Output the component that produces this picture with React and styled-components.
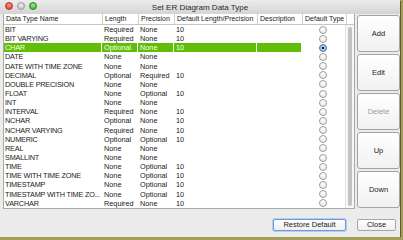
import styled, { createGlobalStyle } from 'styled-components';

const GlobalStyle = createGlobalStyle`
  html, body {
    margin: 0;
    padding: 0;
    background: #a39d55;
  }
  body {
    font-family: "Liberation Sans", Arial, sans-serif;
    -webkit-font-smoothing: antialiased;
  }
`;

const rows = [
  ['BIT', 'Required', 'None', '10'],
  ['BIT VARYING', 'Required', 'None', '10'],
  ['CHAR', 'Optional', 'None', '10'],
  ['DATE', 'None', 'None', ''],
  ['DATE WITH TIME ZONE', 'None', 'None', ''],
  ['DECIMAL', 'Optional', 'Required', '10'],
  ['DOUBLE PRECISION', 'None', 'None', ''],
  ['FLOAT', 'None', 'Optional', '10'],
  ['INT', 'None', 'None', ''],
  ['INTERVAL', 'Required', 'None', '10'],
  ['NCHAR', 'Optional', 'None', '10'],
  ['NCHAR VARYING', 'Required', 'None', '10'],
  ['NUMERIC', 'Optional', 'Optional', '10'],
  ['REAL', 'None', 'None', ''],
  ['SMALLINT', 'None', 'None', ''],
  ['TIME', 'None', 'Optional', '10'],
  ['TIME WITH TIME ZONE', 'None', 'Optional', '10'],
  ['TIMESTAMP', 'None', 'Optional', '10'],
  ['TIMESTAMP WITH TIME ZO...', 'None', 'Optional', '10'],
  ['VARCHAR', 'Required', 'None', '10']
];

const COLS = '98px 36px 36px 83px 45px 44px';

const Window = styled.div`
  width: 400px;
  height: 237px;
  background: #ececec;
  display: flex;
  flex-direction: column;
  box-shadow: 1px 1px 0 #5c5a38;
`;

const TitleBar = styled.div`
  height: 14px;
  flex: none;
  position: relative;
  display: flex;
  align-items: center;
  justify-content: center;
  background: linear-gradient(#ececec, #d4d4d4);
  font-size: 8px;
  color: #2a2a2a;
`;

const Lights = styled.div`
  position: absolute;
  left: 5px;
  top: 2px;
  display: flex;
  gap: 4px;
`;

const Light = styled.span`
  width: 8px;
  height: 8px;
  border-radius: 50%;
  box-sizing: border-box;
  border: 1px solid ${p => p.$edge};
  background: radial-gradient(circle at 50% 35%, ${p => p.$hi}, ${p => p.$color} 70%);
`;

const Body = styled.div`
  flex: 1;
  display: flex;
  gap: 2px;
  padding: 0 0 0 3px;
`;

const Table = styled.div`
  width: 352px;
  height: 195px;
  box-sizing: border-box;
  border: 1px solid #a9a9a9;
  border-top: none;
  background: #fff;
  display: flex;
  flex-direction: column;
  position: relative;
`;

const Header = styled.div`
  display: grid;
  grid-template-columns: ${COLS} 1fr;
  height: 10px;
  flex: none;
  border-bottom: 1px solid #c4c4c4;
  background: #fff;
  font-size: 7px;
  color: #222;
`;

const HeadCell = styled.div`
  line-height: 10px;
  padding-left: 2px;
  white-space: nowrap;
  overflow: hidden;
  border-left: ${p => (p.$first ? 'none' : '1px solid #cfcfcf')};
`;

const Rows = styled.div`
  flex: 1;
  display: flex;
  flex-direction: column;
  padding-right: 9px;
`;

const Row = styled.div`
  display: grid;
  grid-template-columns: ${COLS};
  height: 9.15px;
  font-size: 7.3px;
  line-height: 9.15px;
  color: ${p => (p.$selected ? '#f4ffe8' : '#222')};
`;

const Cell = styled.div`
  padding-left: ${p => (p.$first ? 1 : 2)}px;
  letter-spacing: ${p => (p.$first ? '-0.2px' : '0')};
  white-space: nowrap;
  overflow: hidden;
  background: ${p => (p.$selected ? '#62bd08' : 'transparent')};
  border-right: ${p => (p.$selected ? '1px solid #fff' : 'none')};
`;

const RadioCell = styled.div`
  display: flex;
  align-items: center;
  justify-content: center;
  padding-right: 2px;
`;

const Radio = styled.span`
  width: 8px;
  height: 8px;
  box-sizing: border-box;
  border-radius: 50%;
  border: 1px solid ${p => (p.$on ? '#4a6fa8' : '#9a9a9a')};
  background: ${p =>
    p.$on
      ? 'radial-gradient(circle, #111 0 1.3px, #bcd4f4 1.6px, #7fa8e0 100%)'
      : 'linear-gradient(#ffffff, #ececec)'};
`;

const Scroll = styled.div`
  position: absolute;
  right: 0;
  top: 11px;
  bottom: 0;
  width: 9px;
  box-sizing: border-box;
  border-left: 1px solid #e2e2e2;
  background: #f6f6f6;
  display: flex;
  justify-content: center;
  padding: 2px 0 2px;
`;

const Thumb = styled.div`
  width: 4px;
  border-radius: 2px;
  background: #c2c2c2;
`;

const SideButtons = styled.div`
  width: 43px;
  padding-top: 1px;
  display: flex;
  flex-direction: column;
  gap: 2px;
`;

const SideButton = styled.button`
  height: 37px;
  padding: 0;
  box-sizing: border-box;
  border: 1px solid #a4a4a4;
  border-radius: 3px;
  background: linear-gradient(#ffffff, #f1f1f1);
  font-family: inherit;
  font-size: 7.5px;
  color: ${p => (p.disabled ? '#9a9a9a' : '#222')};
`;

const Footer = styled.div`
  height: 28px;
  flex: none;
  display: flex;
  justify-content: flex-end;
  align-items: center;
  gap: 11px;
  padding: 3px 4px 0 0;
  box-sizing: border-box;
`;

const FootButton = styled.button`
  height: 12px;
  width: ${p => p.$w}px;
  padding: 0;
  box-sizing: border-box;
  border: 1px solid ${p => (p.$focus ? '#6d9ad8' : '#a6a6a6')};
  box-shadow: ${p => (p.$focus ? '0 0 0 1px #b5cdef' : 'none')};
  border-radius: 2px;
  background: linear-gradient(#ffffff, #efefef);
  font-family: inherit;
  font-size: 7.5px;
  color: #222;
`;

const headers = [
  'Data Type Name',
  'Length',
  'Precision',
  'Default Length/Precision',
  'Description',
  'Default Type',
  ''
];

export default function App() {
  return (
    <>
      <GlobalStyle />
      <Window>
        <TitleBar>
          <Lights>
            <Light $color="#e0443e" $hi="#ff9a8f" $edge="#b03a33" />
            <Light $color="#c8c8c8" $hi="#f2f2f2" $edge="#9c9c9c" />
            <Light $color="#3fb63a" $hi="#a5ee8f" $edge="#2e8a2a" />
          </Lights>
          Set ER Diagram Data Type
        </TitleBar>
        <Body>
          <Table>
            <Header>
              {headers.map((h, i) => (
                <HeadCell key={i} $first={i === 0}>
                  {h}
                </HeadCell>
              ))}
            </Header>
            <Rows>
              {rows.map(r => {
                const sel = r[0] === 'CHAR';
                return (
                  <Row key={r[0]} $selected={sel}>
                    <Cell $first $selected={sel}>{r[0]}</Cell>
                    <Cell $selected={sel}>{r[1]}</Cell>
                    <Cell $selected={sel}>{r[2]}</Cell>
                    <Cell $selected={sel}>{r[3]}</Cell>
                    <Cell $selected={sel} />
                    <RadioCell>
                      <Radio $on={sel} />
                    </RadioCell>
                  </Row>
                );
              })}
            </Rows>
            <Scroll>
              <Thumb />
            </Scroll>
          </Table>
          <SideButtons>
            <SideButton>Add</SideButton>
            <SideButton>Edit</SideButton>
            <SideButton disabled>Delete</SideButton>
            <SideButton>Up</SideButton>
            <SideButton>Down</SideButton>
          </SideButtons>
        </Body>
        <Footer>
          <FootButton $w={73} $focus>Restore Default</FootButton>
          <FootButton $w={39}>Close</FootButton>
        </Footer>
      </Window>
    </>
  );
}
